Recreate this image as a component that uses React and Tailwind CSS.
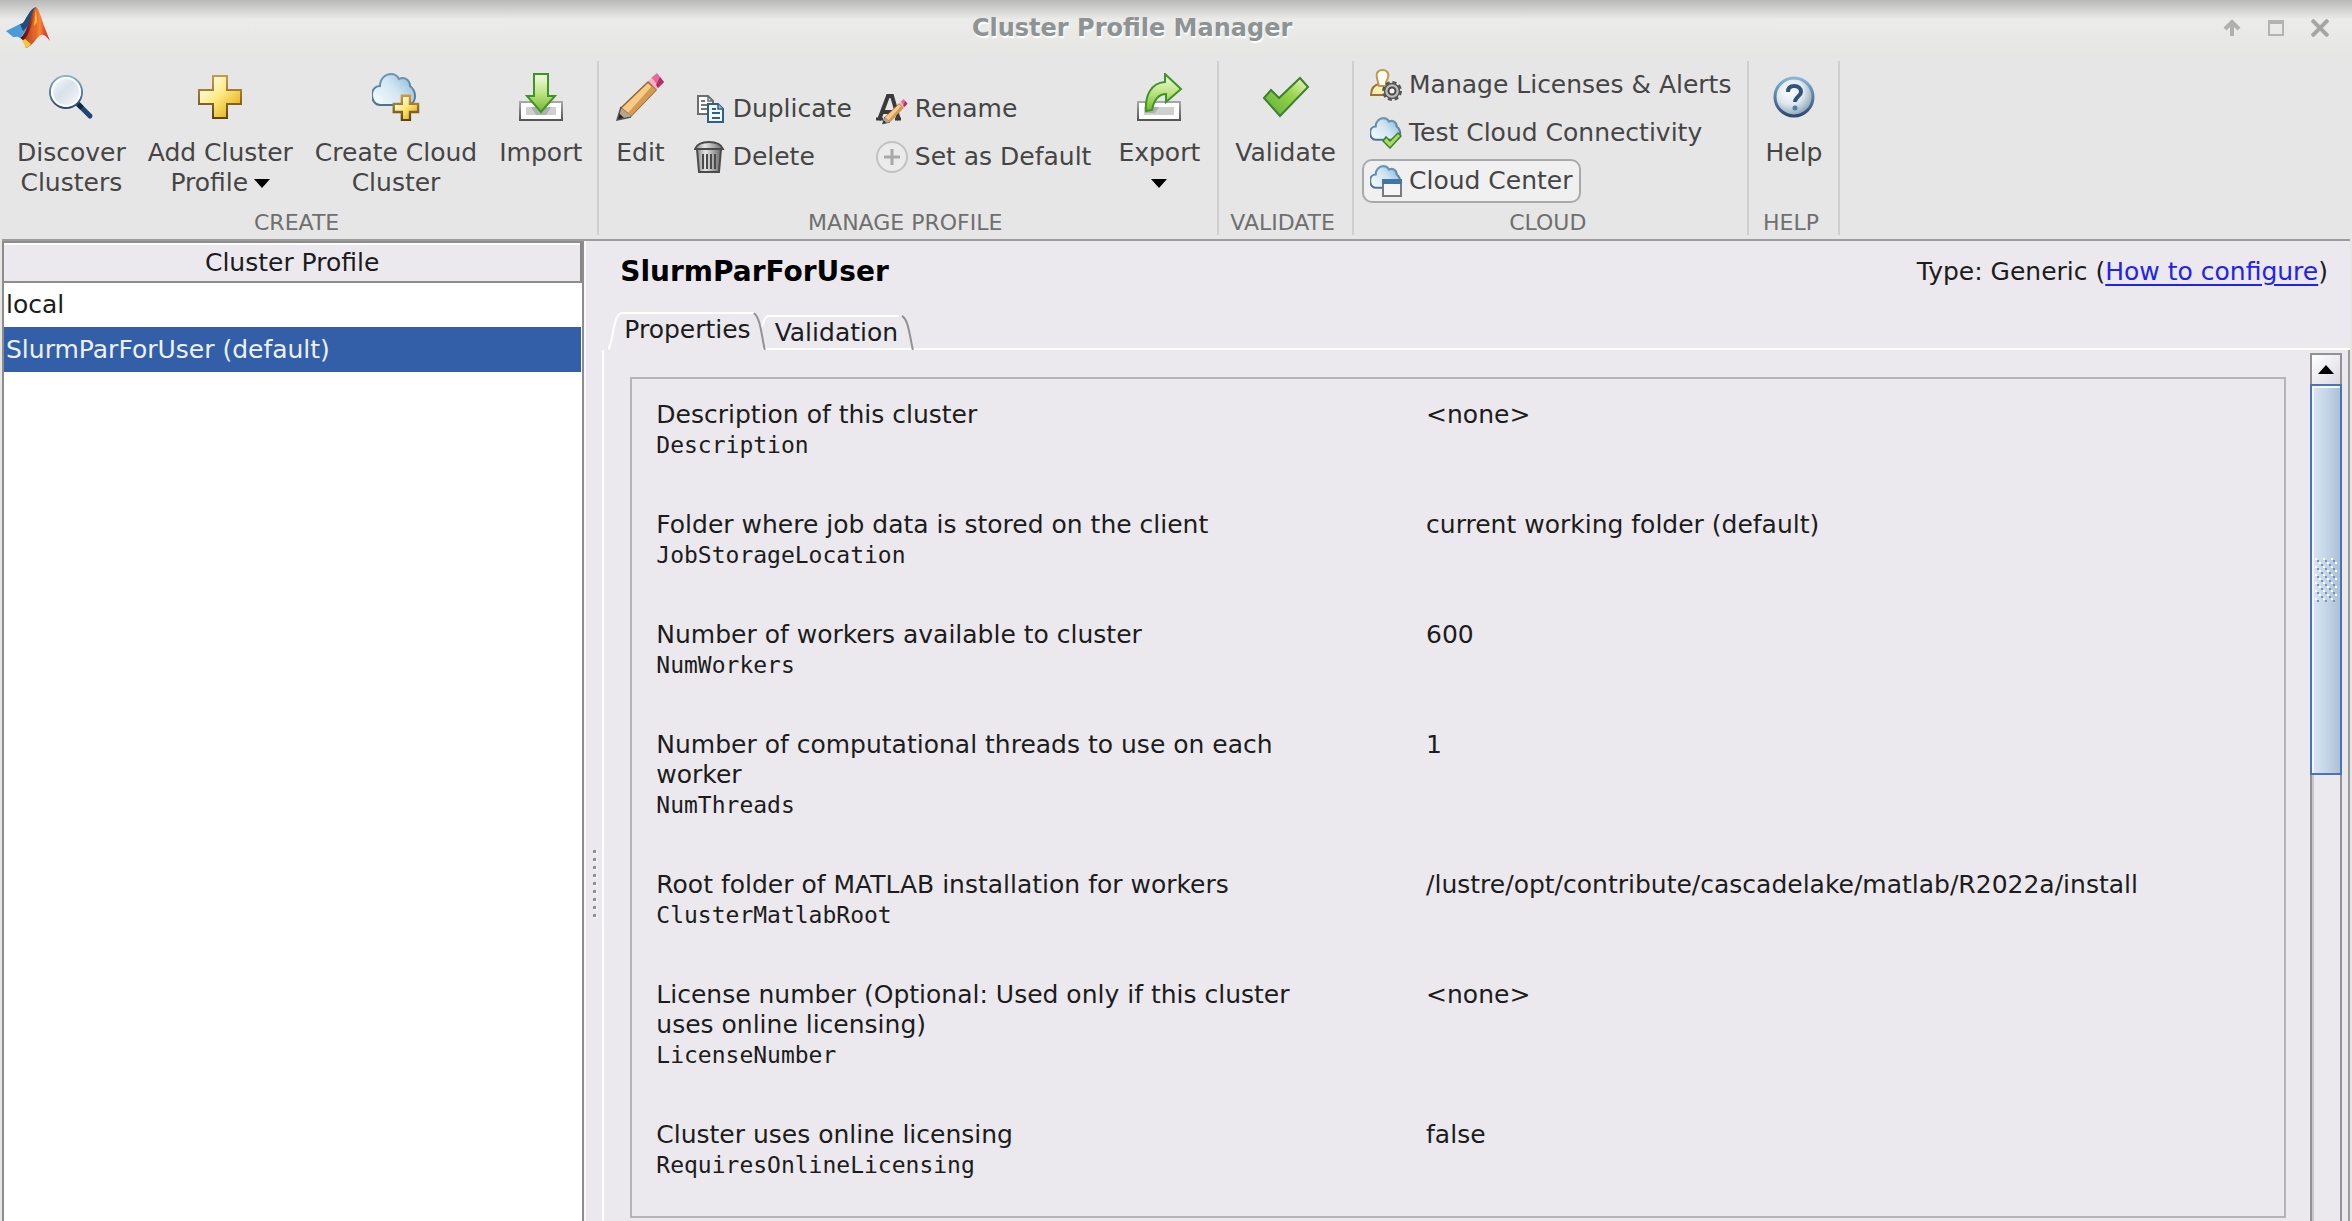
import React, { useState } from 'react';

const FONT = 'font-["DejaVu_Sans",Verdana,sans-serif]';

function Gradients() {
  return (
    <svg width="0" height="0" className="absolute" aria-hidden="true">
      <defs>
        <linearGradient id="gold" x1="0" y1="0" x2="1" y2="1">
          <stop offset="0.2" stopColor="#fffbd6" />
          <stop offset="0.5" stopColor="#fbe67c" />
          <stop offset="0.85" stopColor="#e8b21c" />
        </linearGradient>
        <linearGradient id="goldEdge" x1="0" y1="0" x2="0" y2="1">
          <stop offset="0" stopColor="#c99a45" />
          <stop offset="1" stopColor="#5e4410" />
        </linearGradient>
        <linearGradient id="sky" x1="0" y1="0.7" x2="1" y2="0.1">
          <stop offset="0" stopColor="#f2f9fd" />
          <stop offset="0.5" stopColor="#cfe4f1" />
          <stop offset="1" stopColor="#86b4d4" />
        </linearGradient>
        <linearGradient id="skyEdge" x1="0" y1="0" x2="0" y2="1">
          <stop offset="0" stopColor="#6f97b5" />
          <stop offset="1" stopColor="#48749a" />
        </linearGradient>
        <linearGradient id="leaf" x1="0" y1="0" x2="0" y2="1">
          <stop offset="0" stopColor="#f4fbe6" />
          <stop offset="0.5" stopColor="#bfe384" />
          <stop offset="1" stopColor="#72b82c" />
        </linearGradient>
        <linearGradient id="check" x1="0" y1="1" x2="1" y2="0">
          <stop offset="0.2" stopColor="#6dba3c" />
          <stop offset="0.6" stopColor="#9ad44c" />
          <stop offset="1" stopColor="#eefac8" />
        </linearGradient>
        <linearGradient id="lens" x1="0" y1="0" x2="1" y2="1">
          <stop offset="0" stopColor="#ffffff" />
          <stop offset="0.45" stopColor="#d8e2ea" />
          <stop offset="0.75" stopColor="#eaf0f4" />
          <stop offset="1" stopColor="#ffffff" />
        </linearGradient>
        <linearGradient id="rim" x1="0" y1="0" x2="0" y2="1">
          <stop offset="0" stopColor="#86b5d6" />
          <stop offset="1" stopColor="#2d4a70" />
        </linearGradient>
        <linearGradient id="tray" x1="0" y1="0" x2="0" y2="1">
          <stop offset="0" stopColor="#a8a8a8" />
          <stop offset="1" stopColor="#555555" />
        </linearGradient>
        <linearGradient id="steel" x1="0" y1="0" x2="1" y2="0">
          <stop offset="0" stopColor="#8a8a8a" />
          <stop offset="0.35" stopColor="#e6e6e6" />
          <stop offset="1" stopColor="#6a6a6a" />
        </linearGradient>
        <radialGradient id="ball" cx="0.4" cy="0.35" r="0.7">
          <stop offset="0" stopColor="#ffffff" />
          <stop offset="0.5" stopColor="#dfe8ee" />
          <stop offset="1" stopColor="#7d9bb0" />
        </radialGradient>
        <linearGradient id="flame" x1="0" y1="0" x2="1" y2="0">
          <stop offset="0" stopColor="#3a1420" />
          <stop offset="0.3" stopColor="#8c1d18" />
          <stop offset="0.52" stopColor="#e8622a" />
          <stop offset="0.66" stopColor="#f58a35" />
          <stop offset="0.82" stopColor="#e04a2a" />
          <stop offset="1" stopColor="#c22b25" />
        </linearGradient>
      </defs>
    </svg>
  );
}

const PLUS = 'M17 3h14v14h14v14h-14v14h-14v-14h-14v-14h14z';
const CLOUD =
  'M11 34C6 34 3 29 3 24C3 19 6 15 11 15C11 8 16 3 22 3C27 3 29 6 30 8C35 5 41 9 41 15C45 18 46 22 46 25C46 31 42 34 37 34Z';

function Logo() {
  return (
    <svg width="44" height="42" viewBox="0 0 44 42" aria-hidden="true">
      <path d="M0 24L14 17C18 17 19 12 22 8C25 3 27 1 30 0L24 18L14 31C12 29 9 30 7 30Z" fill="#4a9bd6" />
      <path d="M14 17C18 17 19 12 22 8C25 3 27 1 30 0L22 19L17 24Z" fill="#1f4f78" />
      <path d="M14 31C18 28 21 22 24 13C26 6 28 1 30 0C33 2 35 10 38 19L44 34C40 29 38 27 35 28C30 30 28 38 20 41C19 37 17 32 14 31Z" fill="url(#flame)" />
      <path d="M30 1C27 12 26 20 20 31L17 33L20 41C25 39 27 34 29 31Z" fill="#f07c2c" opacity="0.55" />
      <path d="M30 2C29 10 29 14 28 19L31 15Z" fill="#ffc83c" />
      <path d="M16 34C18 36 19 39 20 41C22 40 24 39 25 37L19 32Z" fill="#f9c63a" />
    </svg>
  );
}

function BigIcon({ children }) {
  return (
    <svg width="48" height="48" viewBox="0 0 48 48" fill="none" className="shrink-0" aria-hidden="true">
      {children}
    </svg>
  );
}

function SmallIcon({ children }) {
  return (
    <svg width="32" height="32" viewBox="0 0 32 32" fill="none" className="shrink-0" aria-hidden="true">
      {children}
    </svg>
  );
}

const SearchIcon = () => (
  <BigIcon>
    <path d="M31 31L43 43" stroke="#1b4874" strokeWidth="5" strokeLinecap="round" />
    <path d="M31 31L35 35" stroke="#12283e" strokeWidth="5" />
    <circle cx="19" cy="19" r="16" fill="url(#lens)" stroke="url(#rim)" strokeWidth="2" />
    <circle cx="19" cy="19" r="14" stroke="#ffffff" strokeWidth="2" />
  </BigIcon>
);
const PlusIcon = () => (
  <BigIcon>
    <path d={PLUS} fill="url(#gold)" stroke="url(#goldEdge)" strokeWidth="2" />
  </BigIcon>
);
const CloudPlusIcon = () => (
  <BigIcon>
    <g transform="translate(-3 -2)">
      <path d={CLOUD} fill="url(#sky)" stroke="url(#skyEdge)" strokeWidth="2" />
    </g>
    <g transform="translate(20 21) scale(0.58)">
      <path d={PLUS} fill="url(#gold)" stroke="url(#goldEdge)" strokeWidth="4" />
    </g>
  </BigIcon>
);
const Tray = () => (
  <>
    <rect x="3" y="29" width="42" height="18" fill="#ffffff" stroke="url(#tray)" strokeWidth="2" />
    <rect x="9" y="34" width="30" height="8" fill="#d0d0d0" />
  </>
);
const ImportIcon = () => (
  <BigIcon>
    <Tray />
    <path d="M14 34h20l-5 8h-10z" fill="#8d8d8d" opacity="0.5" />
    <path d="M17 1h14v22h7l-14 16l-14 -16h7z" fill="url(#leaf)" stroke="#3f9428" strokeWidth="2" />
  </BigIcon>
);
const ExportIcon = () => (
  <BigIcon>
    <Tray />
    <path d="M12 34h12l-4 6h-10z" fill="#8d8d8d" opacity="0.5" />
    <path d="M30 1L46 16L31 29V21C24 21 19 27 17 37L11 38C10 24 15 10 30 9Z" fill="url(#leaf)" stroke="#3f9428" strokeWidth="2" />
  </BigIcon>
);
const PencilShape = () => (
  <>
    <path d="M35 5L41 0L48 9L42 15Z" fill="#e8689a" />
    <path d="M32 8L36 5L43 14L39 18Z" fill="#f3b1c8" />
    <path d="M44 4L48 9L42 15L40 12Z" fill="#b12f62" />
    <path d="M32 9L40 17L15 43L5 35Z" fill="#f9c986" stroke="#8f6632" strokeWidth="1.5" />
    <path d="M36 13L40 17L15 43L12 40Z" fill="#d49a52" />
    <path d="M5 35L15 43L1 47Z" fill="#b5a58e" />
    <path d="M3 40L8 45L1 47Z" fill="#262626" />
    <path d="M5 34L1 47L15 44" stroke="#555555" strokeWidth="1.5" />
  </>
);
const PencilIcon = () => (
  <BigIcon>
    <PencilShape />
  </BigIcon>
);
const CheckIcon = () => (
  <BigIcon>
    <path d="M2 23L9 15L17 23L38 3L46 12L18 41Z" transform="translate(0 2)" fill="url(#check)" stroke="#3c8030" strokeWidth="2" />
  </BigIcon>
);
const HelpIcon = () => (
  <BigIcon>
    <circle cx="24" cy="24" r="19" fill="url(#ball)" stroke="url(#rim)" strokeWidth="3" />
    <path d="M18 19C18 14 21 13 24 13C28 13 31 15 31 19C31 23 25 24 25 29" stroke="#33527a" strokeWidth="4" />
    <circle cx="25" cy="35" r="2.5" fill="#4d7ea8" />
  </BigIcon>
);
const DuplicateIcon = () => (
  <SmallIcon>
    <path d="M4 3h10l5 5v13h-15z" fill="#ffffff" stroke="#6e6e6e" strokeWidth="2" />
    <path d="M14 3v5h5" stroke="#6e6e6e" strokeWidth="1.5" />
    <path d="M7 8h4M7 12h7M7 16h7" stroke="#777777" strokeWidth="2" />
    <path d="M14 11h10l5 5v13h-15z" fill="#f4f9fd" stroke="#2f5f8c" strokeWidth="2" />
    <path d="M24 11v5h5" fill="#9cc1de" stroke="#2f5f8c" strokeWidth="1.5" />
    <path d="M18 16h4M18 20h8M18 25h8" stroke="#2f5f8c" strokeWidth="2" />
  </SmallIcon>
);
const TrashIcon = () => (
  <SmallIcon>
    <path d="M3 8L5 31H25L27 8Z" fill="url(#steel)" stroke="#4b4b4b" strokeWidth="2" />
    <path d="M9 13V28M13 13V28M17 13V28M21 13V28" stroke="#4b4b4b" strokeWidth="2" />
    <path d="M1 8C3 3 9 1 15 1C21 1 27 3 29 8Z" fill="url(#steel)" stroke="#4b4b4b" strokeWidth="2" />
  </SmallIcon>
);
const RenameIcon = () => (
  <SmallIcon>
    <path d="M3 27L12 3H16L23 27M7 19H20" stroke="#3a3a3a" strokeWidth="4" />
    <path d="M0 26H7M19 26H25" stroke="#3a3a3a" strokeWidth="3" />
    <g transform="translate(6 6) scale(0.53)">
      <PencilShape />
    </g>
  </SmallIcon>
);
const DefaultIcon = () => (
  <SmallIcon>
    <circle cx="16" cy="16" r="15" fill="#ebebeb" stroke="#c2c2c2" strokeWidth="2" />
    <path d="M16 8V24M8 16H24" stroke="#a9a9a9" strokeWidth="3" />
  </SmallIcon>
);
const LicenseIcon = () => (
  <SmallIcon>
    <path d="M1 26C1 19 4 16 9 15H15C19 16 22 19 22 26Z" fill="#fbeeb4" stroke="#9a7330" strokeWidth="2" />
    <path d="M8 13C7 10 6 7 7 4C9 0 16 0 18 4C19 7 18 10 16 13V17H9Z" fill="#fffdf2" stroke="#c39a4c" strokeWidth="2" />
    <circle cx="22" cy="22" r="8.5" stroke="#555555" strokeWidth="3" strokeDasharray="4 2.7" />
    <circle cx="22" cy="22" r="7.5" fill="#bdbdbd" stroke="#555555" strokeWidth="1.5" />
    <circle cx="22" cy="22" r="3.5" fill="#f1f1f1" stroke="#4a4a4a" strokeWidth="2" />
  </SmallIcon>
);
const SmallCloud = () => (
  <g transform="translate(-2 -1) scale(0.7)">
    <path d={CLOUD} fill="url(#sky)" stroke="url(#skyEdge)" strokeWidth="3" />
  </g>
);
const CloudCheckIcon = () => (
  <SmallIcon>
    <SmallCloud />
    <path d="M13 24L16 20L20 24L28 16L31 19L20 31Z" fill="#a6dc62" stroke="#3c8030" strokeWidth="1.5" />
  </SmallIcon>
);
const CloudWindowIcon = () => (
  <SmallIcon>
    <SmallCloud />
    <rect x="13" y="15" width="18" height="16" fill="#f6f6f6" stroke="#7b7b7b" strokeWidth="2" />
    <path d="M12 14h20v5h-20z" fill="#3f77a5" />
  </SmallIcon>
);

function Caret() {
  return (
    <svg width="16" height="9" viewBox="0 0 16 9" className="inline-block" aria-hidden="true">
      <path d="M0 0H16L8 9Z" fill="#000000" />
    </svg>
  );
}

function Section({ title, children }) {
  return (
    <section className="mt-1.5 mb-1 flex flex-col border-r-2 border-[#cfcfcf]">
      <div className="flex h-[150px] items-start">{children}</div>
      <h2 className="pr-1.5 text-center text-[22px] leading-6 text-[#6f6f6f]">{title}</h2>
    </section>
  );
}

function BigButton({ icon, lines, caret, caretBelow }) {
  return (
    <button type="button" className="mt-3 flex flex-col items-center gap-[17px] px-[11px] text-[25px] leading-[30px] whitespace-nowrap">
      {icon}
      <span className="flex flex-col items-center">
        {lines.map((line, i) => (
          <span key={line} className="flex items-center gap-1.5">
            {line}
            {caret && i === lines.length - 1 && <Caret />}
          </span>
        ))}
        {caretBelow && (
          <span className="flex h-[30px] items-center">
            <Caret />
          </span>
        )}
      </span>
    </button>
  );
}

function SmallButton({ icon, label, active }) {
  return (
    <button
      type="button"
      className={
        'flex h-11 items-center gap-[7px] self-start rounded-[10px] border-2 px-1.5 text-[25px] leading-[30px] whitespace-nowrap ' +
        (active ? 'border-[#a9a9a9] bg-[#f0f0f0]' : 'border-transparent')
      }
    >
      {icon}
      {label}
    </button>
  );
}

function TitleBar() {
  return (
    <header className="grid h-[55px] grid-cols-[11fr_auto_12fr] items-center bg-gradient-to-b from-[#b9b9b8] via-[#ebebe9] via-35% to-[#e6e6e4] px-1.5">
      <Logo />
      <h1 className="text-[24px] font-bold text-[#8e9393] [text-shadow:1px_2px_1px_#ffffff]">Cluster Profile Manager</h1>
      <div className="flex justify-end gap-5 pr-3.5">
        <button type="button" aria-label="Roll up" className="flex size-6 items-center justify-center">
          <svg width="18" height="18" viewBox="0 0 18 18" fill="none" stroke="#b0b0af" strokeWidth="4">
            <path d="M9 17V3M2 10L9 3L16 10" />
          </svg>
        </button>
        <button type="button" aria-label="Maximize" className="flex size-6 items-center justify-center">
          <span className="size-4 border-2 border-t-4 border-[#b3b3b2]" />
        </button>
        <button type="button" aria-label="Close" className="flex size-6 items-center justify-center">
          <svg width="18" height="18" viewBox="0 0 18 18" fill="none" stroke="#a5a5a4" strokeWidth="4">
            <path d="M1 1L17 17M17 1L1 17" />
          </svg>
        </button>
      </div>
    </header>
  );
}

function Ribbon() {
  return (
    <div className="flex border-b-2 border-[#9d9d9b] bg-[#e6e6e6] text-[#454545]">
      <Section title="CREATE">
        <div className="flex px-1">
          <BigButton icon={<SearchIcon />} lines={['Discover', 'Clusters']} />
          <BigButton icon={<PlusIcon />} lines={['Add Cluster', 'Profile']} caret />
          <BigButton icon={<CloudPlusIcon />} lines={['Create Cloud', 'Cluster']} />
          <BigButton icon={<ImportIcon />} lines={['Import']} />
        </div>
      </Section>
      <Section title="MANAGE PROFILE">
        <div className="flex items-start px-1.5">
          <BigButton icon={<PencilIcon />} lines={['Edit']} />
          <div className="mt-[26px] grid grid-cols-[auto_auto] gap-x-2 gap-y-1 pr-2 pl-2.5">
            <SmallButton icon={<DuplicateIcon />} label="Duplicate" />
            <SmallButton icon={<RenameIcon />} label="Rename" />
            <SmallButton icon={<TrashIcon />} label="Delete" />
            <SmallButton icon={<DefaultIcon />} label="Set as Default" />
          </div>
          <BigButton icon={<ExportIcon />} lines={['Export']} caretBelow />
        </div>
      </Section>
      <Section title="VALIDATE">
        <div className="px-[5px]">
          <BigButton icon={<CheckIcon />} lines={['Validate']} />
        </div>
      </Section>
      <Section title="CLOUD">
        <div className="mt-0.5 flex flex-col gap-1 px-2">
          <SmallButton icon={<LicenseIcon />} label="Manage Licenses & Alerts" />
          <SmallButton icon={<CloudCheckIcon />} label="Test Cloud Connectivity" />
          <SmallButton icon={<CloudWindowIcon />} label="Cloud Center" active />
        </div>
      </Section>
      <Section title="HELP">
        <div className="px-[5px]">
          <BigButton icon={<HelpIcon />} lines={['Help']} />
        </div>
      </Section>
    </div>
  );
}

function ProfileList() {
  const [selected, setSelected] = useState(1);
  const profiles = ['local', 'SlurmParForUser (default)'];
  return (
    <aside className="w-[24.8%] shrink-0 border-x-2 border-t-2 border-[#8d8d8d] bg-white">
      <table className="w-full text-[25px]">
        <thead>
          <tr>
            <th className="h-[38px] border-t-2 border-r-2 border-b-2 border-t-white border-r-[#858585] border-b-[#8d8d8d] bg-[#ebe9ee] leading-[30px] font-normal">
              Cluster Profile
            </th>
          </tr>
        </thead>
        <tbody>
          {profiles.map((name, i) => (
            <tr key={name} onClick={() => setSelected(i)} className={i === selected ? 'bg-[#325fa8] text-[#eef1f7]' : ''}>
              <td className="h-[45px] px-0.5 leading-[30px]">{name}</td>
            </tr>
          ))}
        </tbody>
      </table>
    </aside>
  );
}

function Splitter() {
  return (
    <div className="flex w-[18px] shrink-0 flex-col items-center justify-center gap-[5px] border-l-2 border-[#f8f7fa] pt-[304px]">
      {Array.from({ length: 9 }, (_, i) => (
        <span key={i} className="size-[3px] shrink-0 bg-[#8f8e93] shadow-[1px_1px_0_#ffffff]" />
      ))}
    </div>
  );
}

function TabShape({ children, first }) {
  return (
    <button
      type="button"
      role="tab"
      aria-selected={Boolean(first)}
      className={'relative px-4 text-[25px] leading-[30px] ' + (first ? 'h-[38px] pb-0.5' : '-ml-2 h-[35px]')}
    >
      <svg className="absolute inset-0 size-full" fill="none" strokeWidth="2" viewBox="0 0 100 36" preserveAspectRatio="none" aria-hidden="true">
        <path d={first ? 'M0 36C4 26 3 1 9 1H93' : 'M2 12C3 6 4 1 6 1H90'} stroke="#ffffff" vectorEffect="non-scaling-stroke" />
        <path d="M92 1C96 4 97 22 99 36" stroke="#929292" vectorEffect="non-scaling-stroke" />
      </svg>
      <span className="relative">{children}</span>
    </button>
  );
}

const PROPERTIES = [
  { label: 'Description of this cluster', name: 'Description', value: '<none>' },
  { label: 'Folder where job data is stored on the client', name: 'JobStorageLocation', value: 'current working folder (default)' },
  { label: 'Number of workers available to cluster', name: 'NumWorkers', value: '600' },
  { label: 'Number of computational threads to use on each worker', name: 'NumThreads', value: '1' },
  {
    label: 'Root folder of MATLAB installation for workers',
    name: 'ClusterMatlabRoot',
    value: '/lustre/opt/contribute/cascadelake/matlab/R2022a/install',
  },
  { label: 'License number (Optional: Used only if this cluster uses online licensing)', name: 'LicenseNumber', value: '<none>' },
  { label: 'Cluster uses online licensing', name: 'RequiresOnlineLicensing', value: 'false' },
];

function PropertyList() {
  return (
    <dl className="mt-[27px] mr-6 mb-[3px] ml-[26px] flex flex-1 flex-col gap-[50px] border-2 border-[#b5b3b8] px-6 pt-[21px] pb-8 text-[25px] leading-[30px]">
      {PROPERTIES.map((p) => (
        <div key={p.name} className="grid grid-cols-[48%_52%]">
          <dt className="pr-28">
            {p.label}
            <span className='block font-["DejaVu_Sans_Mono",monospace] text-[23px]'>{p.name}</span>
          </dt>
          <dd>{p.value}</dd>
        </div>
      ))}
    </dl>
  );
}

function ScrollBar() {
  return (
    <div className="mt-[3px] mr-1.5 flex w-8 shrink-0 flex-col border-x-2 border-t-2 border-[#929292]">
      <button type="button" aria-label="Scroll up" className="flex h-[29px] shrink-0 items-center justify-center bg-gradient-to-br from-white to-[#dcdae2]">
        <svg width="16" height="9" viewBox="0 0 16 9" aria-hidden="true">
          <path d="M0 9H16L8 0Z" fill="#000000" />
        </svg>
      </button>
      <div className="-mx-0.5 flex h-[391px] shrink-0 items-center justify-center border-2 border-[#4a74b8] bg-gradient-to-r from-[#dbe6f2] via-[#c5d6e9] to-[#aec0d4] shadow-[inset_2px_2px_0_#f4f8fc]">
        <svg width="22" height="44" aria-hidden="true">
          <defs>
            <pattern id="grip" width="8" height="8" patternUnits="userSpaceOnUse">
              <path d="M0 0h2v2h-2zM4 4h2v2h-2z" fill="#ffffff" />
              <path d="M2 2h2v2h-2zM6 6h2v2h-2z" fill="#6f93cc" />
            </pattern>
          </defs>
          <rect width="22" height="44" fill="url(#grip)" />
        </svg>
      </div>
      <div className="flex-1 border-l-2 border-[#c9c7cc]" />
    </div>
  );
}

function Details() {
  return (
    <main className="flex min-w-0 flex-1 flex-col">
      <div className="flex h-[71px] items-start justify-between pt-4 pr-[22px] pl-[18px] leading-[30px]">
        <h2 className="text-[28px] font-bold text-black">SlurmParForUser</h2>
        <p className="text-[25px]">
          Type: Generic (
          <a href="#configure" className="text-[#2222ee] underline decoration-2 underline-offset-4">
            How to configure
          </a>
          )
        </p>
      </div>
      <div role="tablist" className="flex items-end pl-1.5">
        <TabShape first>Properties</TabShape>
        <TabShape>Validation</TabShape>
        <span className="-ml-[152px] h-0.5 flex-1 self-end bg-white" />
      </div>
      <div className="flex flex-1 border-r-2 border-l-2 border-r-[#9b9b9b] border-l-white">
        <PropertyList />
        <ScrollBar />
      </div>
    </main>
  );
}

export default function App() {
  return (
    <div className={'flex min-h-screen flex-col bg-[#e6e6e4] text-[#1c1c1c] ' + FONT}>
      <Gradients />
      <TitleBar />
      <div className="flex flex-1 flex-col px-0.5">
        <Ribbon />
        <div className="flex flex-1 bg-[#ebe9ee]">
          <ProfileList />
          <Splitter />
          <Details />
        </div>
      </div>
    </div>
  );
}
